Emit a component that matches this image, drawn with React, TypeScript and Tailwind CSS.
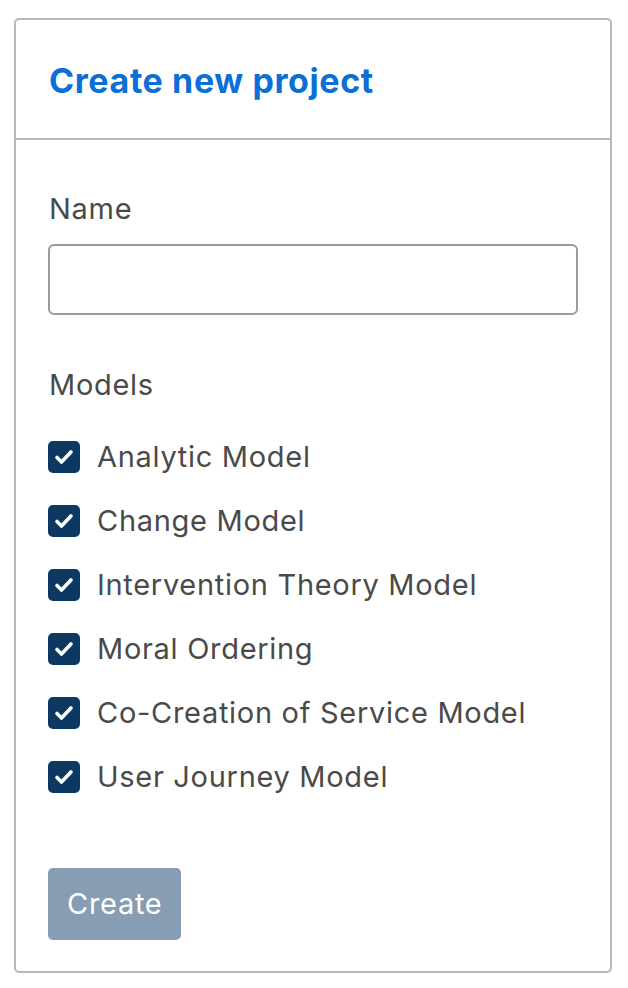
import { useState } from 'react'

const MODELS = [
  'Analytic Model',
  'Change Model',
  'Intervention Theory Model',
  'Moral Ordering',
  'Co-Creation of Service Model',
  'User Journey Model',
]

function CheckBox({ checked, onClick }: { checked: boolean; onClick: () => void }){
  return (
    <button
      type="button"
      onClick={onClick}
      className={`w-[32px] h-[32px] rounded-[5px] flex items-center justify-center shrink-0 ${checked ? 'bg-[#0c3962]' : 'bg-white border-2 border-[#999]'}`}
    >
      {checked && (
        <svg width="24" height="24" viewBox="0 0 24 24" fill="none">
          <path d="M5 12.5l4.5 4.5 9.5-10" stroke="white" strokeWidth="3.6" strokeLinecap="round" strokeLinejoin="round"/>
        </svg>
      )}
    </button>
  )
}

export default function App(){
  const [name, setName] = useState('')
  const [selected, setSelected] = useState<string[]>(MODELS)

  function toggle(m: string){
    setSelected(s => s.includes(m) ? s.filter(x => x !== m) : [...s, m])
  }

  return (
    <div className="bg-white min-h-[988px] pt-[18px] pl-[14px] font-['Inter',sans-serif]">
      <div className="w-[598px] border-2 border-[#b8b8b8] rounded-[5px]">
        <div className="h-[120px] flex items-center px-[33px] pt-[2px] border-b-2 border-[#b8b8b8]">
          <h1 className="text-[34px] font-bold text-[#0a6fd6] tracking-[0.6px]">Create new project</h1>
        </div>
        <div className="pt-[52px] pb-[31px] px-[32px] text-[#4a4a4a] text-[29px] tracking-[0.7px]">
          <label className="block leading-[34px] ml-[1px]">Name</label>
          <input
            value={name}
            onChange={e => setName(e.target.value)}
            className="mt-[18px] block w-full h-[71px] border-2 border-[#9b9b9b] rounded-[6px] px-4 outline-none"
          />
          <div className="mt-[53px] leading-[34px] ml-[1px]">Models</div>
          <div className="mt-[39px] flex flex-col gap-[32px]">
            {MODELS.map(m => (
              <div key={m} className="flex items-center h-[32px] gap-[17px]">
                <CheckBox checked={selected.includes(m)} onClick={() => toggle(m)} />
                <span className="leading-[34px]">{m}</span>
              </div>
            ))}
          </div>
          <button
            disabled={!name}
            className="mt-[75px] h-[72px] px-[19px] rounded-[5px] bg-[#869db3] text-white"
          >
            Create
          </button>
        </div>
      </div>
    </div>
  )
}
